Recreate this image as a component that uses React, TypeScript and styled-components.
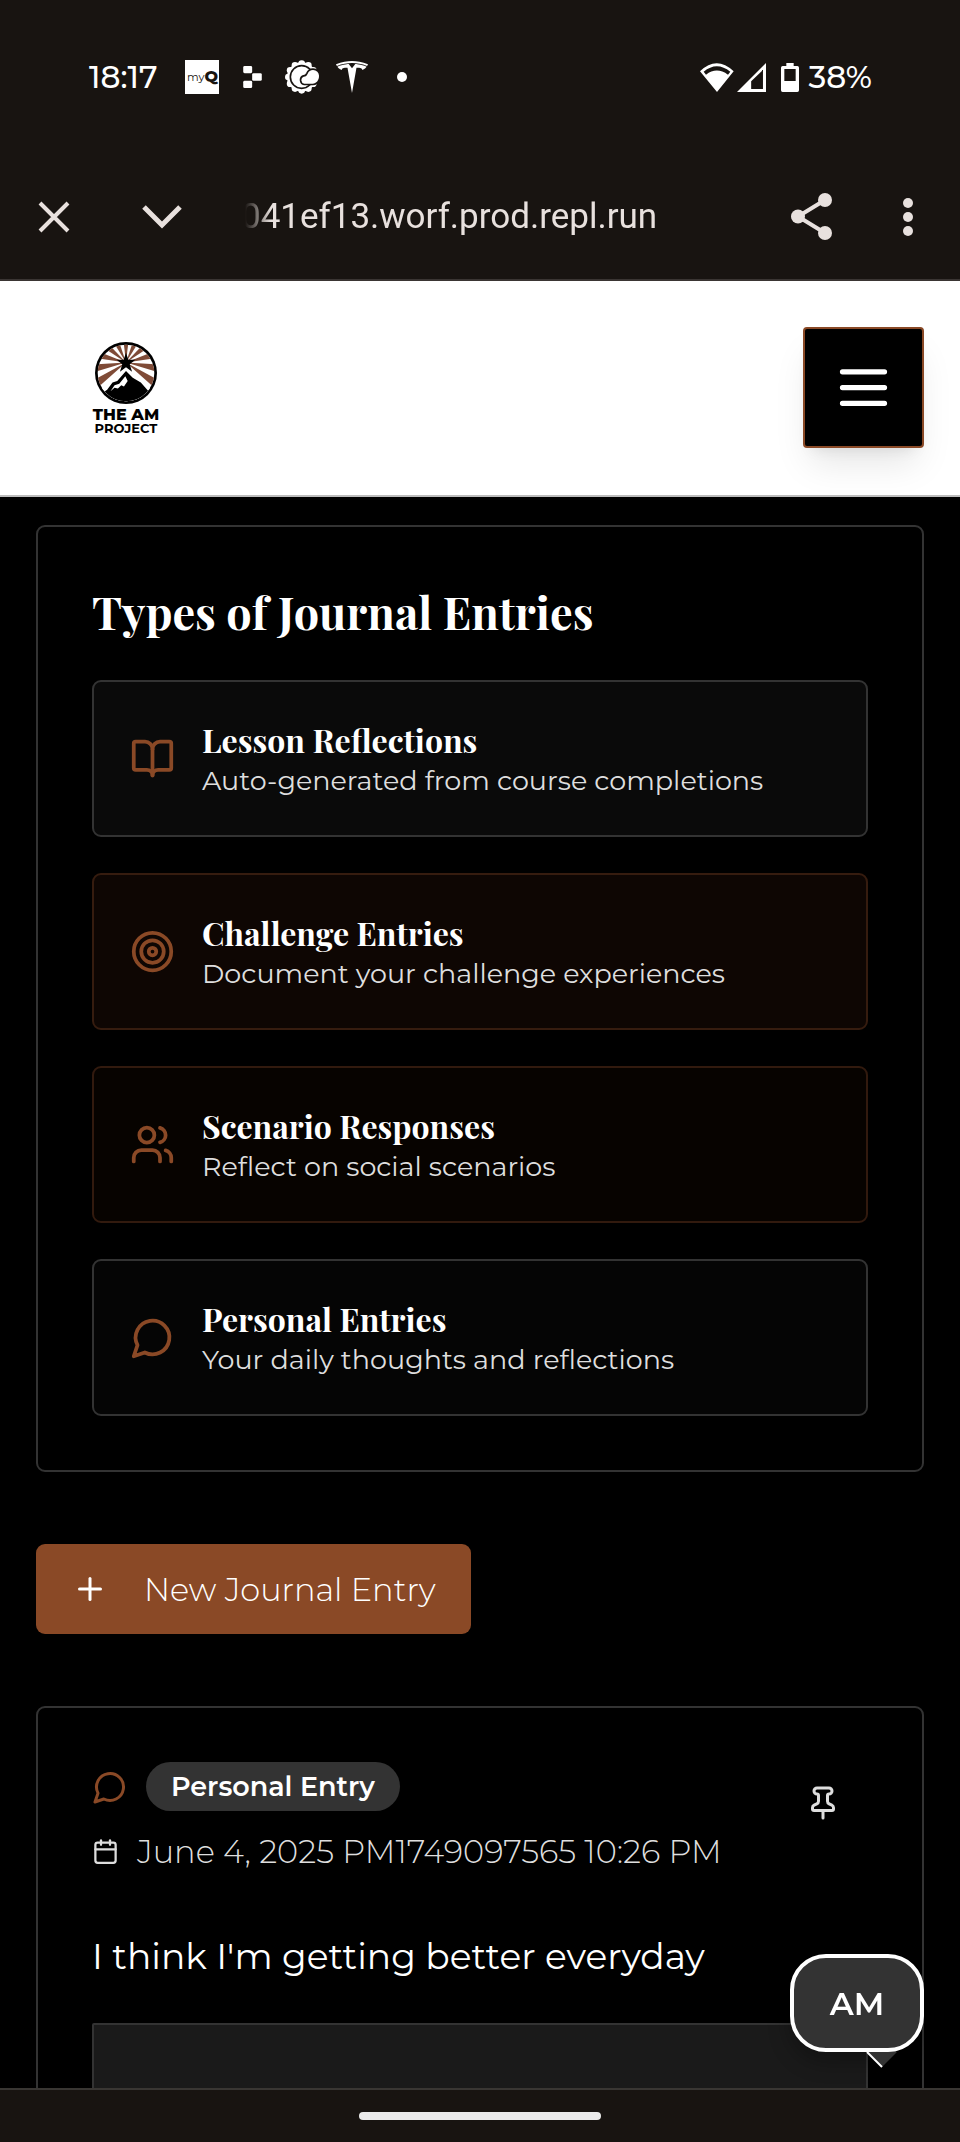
import React from 'react';
import styled, { createGlobalStyle } from 'styled-components';
import { BookOpen, Target, Users, Plus, Pin, Calendar } from 'lucide-react';
import { SiTesla } from 'react-icons/si';

const sans = '"Montserrat", "Open Sans", sans-serif';
const serif = '"Playfair Display", "Liberation Serif", serif';
const copper = '#8a4926';
const line = '#333333';
const chrome = '#181411';

const GlobalStyle = createGlobalStyle`
  * { box-sizing: border-box; }
  body { margin: 0; background: #000; font-family: ${sans}; }
  h2, h3, p { margin: 0; }
  svg { display: block; flex: none; }
  button { margin: 0; padding: 0; border: 0; background: none; color: inherit; font-family: inherit; cursor: pointer; }
`;

const Screen = styled.div`
  display: flex;
  flex-direction: column;
  height: 100vh;
  overflow: hidden;
  color: #fff;
  background: #000;
`;

const StatusBar = styled.div`
  flex: none;
  display: flex;
  justify-content: space-between;
  align-items: center;
  height: 154px;
  padding: 0 88px 0 89px;
  background: ${chrome};
  font-size: 31px;
  font-weight: 500;
`;

const StatusGroup = styled.div<{ $gap: number }>`
  display: flex;
  align-items: center;
  gap: ${(p) => p.$gap}px;
`;

const Clock = styled.time`
  margin-right: 12px;
`;

const Slot = styled.span<{ $tile?: boolean }>`
  display: flex;
  align-items: center;
  justify-content: center;
  width: 34px;
  height: 34px;
  background: ${(p) => (p.$tile ? '#fff' : 'transparent')};
  color: ${(p) => (p.$tile ? '#181411' : '#fff')};
  font-size: 11px;
  font-weight: 400;
  line-height: 34px;

  b { font-size: 16px; font-weight: 800; }
`;

const Signals = styled.div`
  display: flex;
  align-items: center;
  gap: 3px;
  margin-right: 6px;
`;

const BrowserBar = styled.div`
  flex: none;
  display: flex;
  align-items: center;
  padding: 0 25px 0 27px;
  height: 127px;
  border-bottom: 2px solid #3a3533;
  background: ${chrome};
  color: #e8e1de;
`;

const BarButton = styled.button`
  display: flex;
  align-items: center;
  justify-content: center;
  width: 54px;
  height: 54px;
`;

const BarActions = styled.div<{ $gap: number }>`
  display: flex;
  gap: ${(p) => p.$gap}px;
`;

const Address = styled.div`
  flex: 1;
  min-width: 0;
  margin: 0 36px 0 52px;
  overflow: hidden;
  white-space: nowrap;
  font: 400 35px/44px Roboto, sans-serif;
  mask-image: linear-gradient(to right, transparent 4px, #000 30px);
`;

const SiteHeader = styled.header`
  flex: none;
  display: flex;
  align-items: center;
  justify-content: space-between;
  height: 216px;
  padding: 0 36px 1px 90px;
  border-bottom: 2px solid #bdbdbd;
  background: #fff;
`;

const Brand = styled.a`
  display: flex;
  flex-direction: column;
  align-items: center;
  width: 72px;
  color: #000;
  text-decoration: none;
  white-space: nowrap;
`;

const BrandName = styled.span`
  margin-top: 2px;
  font-size: 16px;
  font-weight: 800;
  line-height: 17px;
`;

const BrandSub = styled.span`
  font-size: 13px;
  font-weight: 700;
  line-height: 11px;
`;

const MenuButton = styled.button`
  display: flex;
  align-items: center;
  justify-content: center;
  width: 121px;
  height: 121px;
  border: 2px solid ${copper};
  border-radius: 4px;
  background: #000;
  box-shadow: 0 22px 34px -7px rgba(0, 0, 0, 0.1), 0 9px 14px -9px rgba(0, 0, 0, 0.1);
`;

const Main = styled.main`
  flex: 1;
  min-height: 0;
  display: flex;
  flex-direction: column;
  gap: 72px;
  padding: 28px 36px 0;
  overflow: hidden;
`;

const Card = styled.section`
  flex: none;
  padding: 54px;
  border: 2px solid ${line};
  border-radius: 9px;
  background: #000;
`;

const CardTitle = styled.h2`
  margin-bottom: 38px;
  font: 700 45px/61px ${serif};
`;

const TypeList = styled.div`
  display: flex;
  flex-direction: column;
  gap: 36px;
`;

const TypeRow = styled.div<{ $bg: string; $edge: string }>`
  display: flex;
  align-items: center;
  gap: 27px;
  padding: 36px;
  border: 2px solid ${(p) => p.$edge};
  border-radius: 9px;
  background: ${(p) => p.$bg};

  svg { color: ${copper}; }
`;

const TypeName = styled.h3`
  margin-bottom: 2px;
  font: 700 32px/43px ${serif};
`;

const TypeText = styled.p`
  color: #dedede;
  font-size: 27px;
  line-height: 36px;
`;

const NewEntry = styled.button`
  flex: none;
  align-self: flex-start;
  display: flex;
  align-items: center;
  gap: 36px;
  height: 90px;
  padding: 0 35px 0 36px;
  border-radius: 9px;
  background: ${copper};
  color: #fff;
  font-size: 32px;
  font-weight: 350;
`;

const EntryHead = styled.div`
  display: flex;
  justify-content: space-between;
  align-items: flex-start;
`;

const EntryMeta = styled.div`
  display: flex;
  flex-direction: column;
  gap: 18px;
`;

const MetaLine = styled.div`
  display: flex;
  align-items: center;
  gap: 18px;
  color: #dedede;
  font-size: 32px;
  font-weight: 350;
  line-height: 45px;
`;

const Badge = styled.span`
  padding: 6px 25px;
  border-radius: 25px;
  background: ${line};
  color: #fff;
  font-size: 27px;
  font-weight: 600;
  line-height: 37px;
`;

const PinButton = styled.button`
  display: flex;
  align-items: center;
  justify-content: center;
  width: 90px;
  height: 81px;
  color: #dedede;
`;

const EntryText = styled.p`
  margin: 54px 0 38px;
  font-size: 36px;
  line-height: 57px;
`;

const Reply = styled.div`
  height: 200px;
  border: 2px solid ${line};
  border-radius: 2px;
  background: #1a1a1a;
`;

const ChatButton = styled.button`
  position: fixed;
  right: 36px;
  bottom: 90px;
  width: 134px;
  height: 98px;
  border: 4px solid #fff;
  border-radius: 36px;
  background: ${line};
  box-shadow: 0 9px 22px rgba(0, 0, 0, 0.3);
  font-size: 32px;
  font-weight: 600;
`;

const ChatTail = styled.svg`
  position: absolute;
  right: 22px;
  top: 92px;
`;

const GestureBar = styled.div`
  flex: none;
  display: flex;
  align-items: center;
  justify-content: center;
  height: 54px;
  border-top: 2px solid #393633;
  background: ${chrome};
`;

const Handle = styled.div`
  width: 242px;
  height: 8px;
  border-radius: 4px;
  background: #ebebeb;
`;

const MessageIcon = ({ size, color = 'currentColor' }: { size: number; color?: string }) => (
  <svg width={size} height={size} viewBox="0 0 24 24" fill="none" stroke={color} strokeWidth="2" strokeLinecap="round" strokeLinejoin="round">
    <path d="M7.9 20A9 9 0 1 0 4 16.1L2 22Z" />
  </svg>
);

const BlocksIcon = () => (
  <svg width="19" height="22" viewBox="0 0 54 64" fill="#fff">
    <rect width="26" height="21" rx="4" />
    <rect x="26" y="21" width="28" height="22" rx="4" />
    <rect y="43" width="26" height="21" rx="4" />
  </svg>
);

const WeatherIcon = () => (
  <svg width="34" height="34" viewBox="0 0 102 102">
    <g fill="#fff">
      <circle cx="50" cy="51" r="44" />
      {Array.from({ length: 12 }, (_, i) => (
        <circle key={i} cx={50 + 40 * Math.sin((i * Math.PI) / 6)} cy={51 - 40 * Math.cos((i * Math.PI) / 6)} r="10" />
      ))}
    </g>
    <circle cx="50" cy="51" r="34" fill="#fff" stroke={chrome} strokeWidth="5" />
    <path
      d="M84 30a18 18 0 0 1 18 19c0 12-8 22-19 22H58a11 11 0 0 1-2-21c7-1 9-3 12-9a18 18 0 0 1 16-11Z"
      fill="#fff"
      stroke={chrome}
      strokeWidth="10"
    />
    <path d="M84 30a18 18 0 0 1 18 19c0 12-8 22-19 22H58a11 11 0 0 1-2-21c7-1 9-3 12-9a18 18 0 0 1 16-11Z" fill="#fff" />
  </svg>
);

const WifiIcon = () => (
  <svg width="34" height="29" viewBox="0 0 102 87" fill="#fff" fillRule="evenodd">
    <path d="M0 25Q50-23 101 25L51 87ZM11 26L18 35Q50 10 84 35L91 26Q50-7 11 26Z" />
  </svg>
);

const CellIcon = () => (
  <svg width="29" height="29" viewBox="0 0 86 86" fill="#fff" fillRule="evenodd">
    <path d="M0 86L86 0V86ZM42 54V77H77V21Z" />
  </svg>
);

const BatteryIcon = () => (
  <svg width="18" height="29" viewBox="0 0 54 87" fill="#fff" fillRule="evenodd">
    <path d="M16 0H38V9H49Q54 9 54 14V82Q54 87 49 87H5Q0 87 0 82V14Q0 9 5 9H16ZM10 18V54H44V18Z" />
  </svg>
);

const rays = [-125, -100, -75, -50, -25, 0, 25, 50, 75, 100, 125];

const LogoMark = () => (
  <svg width="62" height="62" viewBox="0 0 184 184">
    <clipPath id="disc">
      <circle cx="92" cy="92" r="84" />
    </clipPath>
    <circle cx="92" cy="92" r="92" fill="#000" />
    <g clipPath="url(#disc)">
      <rect width="184" height="184" fill="#fff" />
      {rays.map((a) => (
        <path key={a} d="M92 61L78-60H106Z" fill="#7f4b37" transform={`rotate(${a} 92 61)`} />
      ))}
      <path d="M-5 165L45 108L92 74L132 106L190 162V190H-5Z" fill="#fff" />
      <path d="M10 160L36 142L52 120L66 116L92 86L112 106L136 120L166 154L184 160V190H0Z" fill="#000" />
      <path d="M46 146L58 128L72 124L90 102L97 116L86 132L78 128L68 138L58 136Z" fill="#fff" />
    </g>
    <path d="M92 32L99 53H120L103 66L110 88L92 75L74 88L81 66L64 53H85Z" fill="#000" />
  </svg>
);

const entryTypes = [
  { name: 'Lesson Reflections', text: 'Auto-generated from course completions', icon: <BookOpen size={45} />, bg: '#0a0a0a', edge: line },
  { name: 'Challenge Entries', text: 'Document your challenge experiences', icon: <Target size={45} />, bg: '#0e0603', edge: '#361c0f' },
  { name: 'Scenario Responses', text: 'Reflect on social scenarios', icon: <Users size={45} />, bg: '#070300', edge: '#321a0e' },
  { name: 'Personal Entries', text: 'Your daily thoughts and reflections', icon: <MessageIcon size={45} />, bg: '#050505', edge: line },
];

export default function App() {
  return (
    <Screen>
      <GlobalStyle />
      <StatusBar>
        <StatusGroup $gap={16}>
          <Clock>18:17</Clock>
          <Slot $tile>my<b>Q</b></Slot>
          <Slot><BlocksIcon /></Slot>
          <Slot><WeatherIcon /></Slot>
          <Slot><SiTesla size={32} /></Slot>
          <Slot>
            <svg width="10" height="10" viewBox="0 0 10 10"><circle cx="5" cy="5" r="5" fill="#fff" /></svg>
          </Slot>
        </StatusGroup>
        <StatusGroup $gap={9}>
          <Signals><WifiIcon /><CellIcon /></Signals>
          <BatteryIcon />
          <span>38%</span>
        </StatusGroup>
      </StatusBar>

      <BrowserBar>
        <BarActions $gap={54}>
          <BarButton aria-label="Close">
            <svg width="32" height="32" viewBox="0 0 32 32" stroke="currentColor" strokeWidth="4"><path d="M2 2L30 30M30 2L2 30" /></svg>
          </BarButton>
          <BarButton aria-label="Collapse">
            <svg width="40" height="26" viewBox="0 0 40 26" fill="none" stroke="currentColor" strokeWidth="5"><path d="M2 3L20 21L38 3" /></svg>
          </BarButton>
        </BarActions>
        <Address>041ef13.worf.prod.repl.run</Address>
        <BarActions $gap={43}>
          <BarButton aria-label="Share">
            <svg width="41" height="47" viewBox="0 0 41 47" fill="currentColor">
              <path d="M34 7L7 23.5L34 40" fill="none" stroke="currentColor" strokeWidth="4" />
              <circle cx="34" cy="7" r="7" /><circle cx="7" cy="23.5" r="7" /><circle cx="34" cy="40" r="7" />
            </svg>
          </BarButton>
          <BarButton aria-label="More">
            <svg width="10" height="38" viewBox="0 0 10 38" fill="currentColor">
              <circle cx="5" cy="5" r="5" /><circle cx="5" cy="19" r="5" /><circle cx="5" cy="33" r="5" />
            </svg>
          </BarButton>
        </BarActions>
      </BrowserBar>

      <SiteHeader>
        <Brand href="#">
          <LogoMark />
          <BrandName>THE AM</BrandName>
          <BrandSub>PROJECT</BrandSub>
        </Brand>
        <MenuButton aria-label="Open menu">
          <svg width="63" height="63" viewBox="0 0 24 24" fill="none" stroke="currentColor" strokeWidth="2" strokeLinecap="round">
            <path d="M4 6h16M4 12h16M4 18h16" />
          </svg>
        </MenuButton>
      </SiteHeader>

      <Main>
        <Card>
          <CardTitle>Types of Journal Entries</CardTitle>
          <TypeList>
            {entryTypes.map((t) => (
              <TypeRow key={t.name} $bg={t.bg} $edge={t.edge}>
                {t.icon}
                <div>
                  <TypeName>{t.name}</TypeName>
                  <TypeText>{t.text}</TypeText>
                </div>
              </TypeRow>
            ))}
          </TypeList>
        </Card>

        <NewEntry>
          <Plus size={36} />
          New Journal Entry
        </NewEntry>

        <Card>
          <EntryHead>
            <EntryMeta>
              <MetaLine>
                <MessageIcon size={36} color={copper} />
                <Badge>Personal Entry</Badge>
              </MetaLine>
              <MetaLine>
                <Calendar size={27} />
                <span>June 4, 2025 PM1749097565 10:26 PM</span>
              </MetaLine>
            </EntryMeta>
            <PinButton aria-label="Pin entry"><Pin size={36} /></PinButton>
          </EntryHead>
          <EntryText>I think I'm getting better everyday</EntryText>
          <Reply />
        </Card>
      </Main>

      <ChatButton>
        AM
        <ChatTail width="32" height="18" viewBox="0 0 32 18">
          <path d="M1 2L16 17L31 2Z" fill="#333" />
          <path d="M1 2L16 17" stroke="#fff" strokeWidth="2" />
        </ChatTail>
      </ChatButton>

      <GestureBar><Handle /></GestureBar>
    </Screen>
  );
}
